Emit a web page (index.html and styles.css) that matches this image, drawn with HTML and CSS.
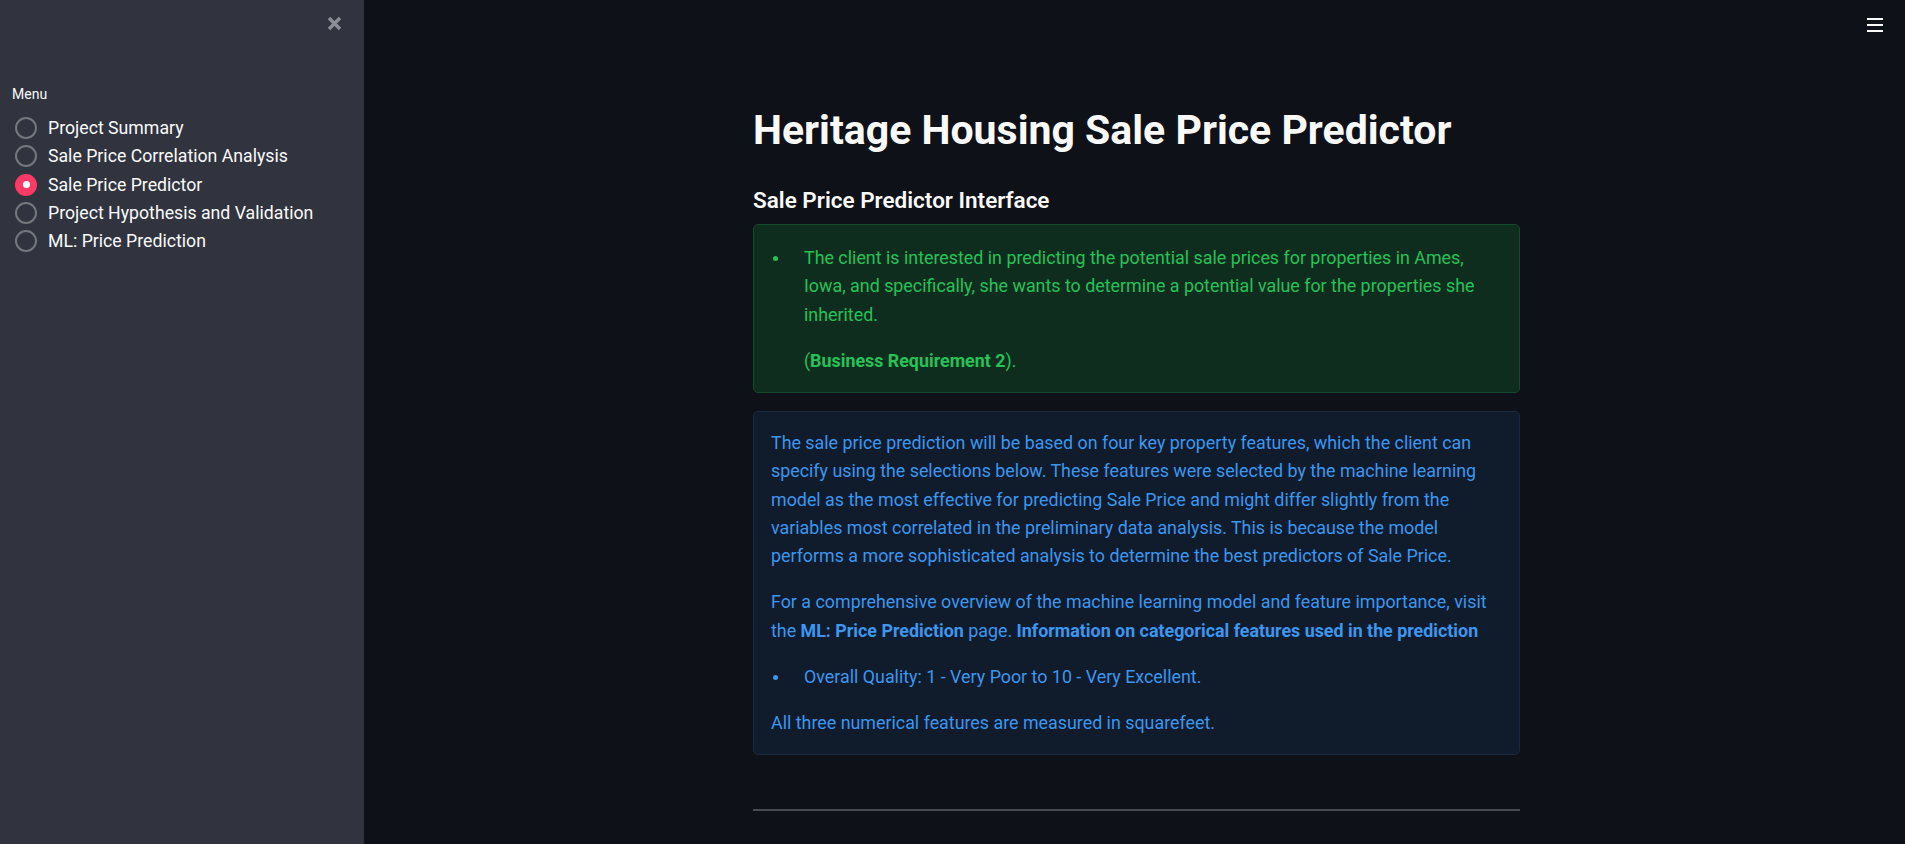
FILE: index.html
```html
<!DOCTYPE html>
<html lang="en">
<head>
<meta charset="utf-8">
<title>Heritage Housing Sale Price Predictor</title>
<link rel="stylesheet" href="styles.css">
</head>
<body>
<div class="app">
  <aside class="sidebar">
    <div class="sidebar-top">
      <button class="close-btn" aria-label="Close sidebar">
        <svg width="15" height="15" viewBox="0 0 15 15"><path d="M2 2 L13 13 M13 2 L2 13" stroke="#8d8e95" stroke-width="3.4" stroke-linecap="butt"/></svg>
      </button>
    </div>
    <div class="menu">
      <div class="menu-label">Menu</div>
      <ul class="radio-list">
        <li class="radio-item"><span class="radio"></span><span class="radio-text">Project Summary</span></li>
        <li class="radio-item"><span class="radio"></span><span class="radio-text">Sale Price Correlation Analysis</span></li>
        <li class="radio-item"><span class="radio checked"></span><span class="radio-text">Sale Price Predictor</span></li>
        <li class="radio-item"><span class="radio"></span><span class="radio-text">Project Hypothesis and Validation</span></li>
        <li class="radio-item"><span class="radio"></span><span class="radio-text">ML: Price Prediction</span></li>
      </ul>
    </div>
  </aside>
  <main class="main">
    <button class="hamburger" aria-label="Menu">
      <span></span><span></span><span></span>
    </button>
    <div class="block">
      <h1 class="title">Heritage Housing Sale Price Predictor</h1>
      <h3 class="subtitle">Sale Price Predictor Interface</h3>
      <div class="alert success">
        <ul class="bullets first">
          <li>The client is interested in predicting the potential sale prices for properties in Ames,<br>Iowa, and specifically, she wants to determine a potential value for the properties she<br>inherited.</li>
        </ul>
        <p class="indented">(<strong>Business Requirement 2</strong>).</p>
      </div>
      <div class="alert info">
        <p>The sale price prediction will be based on four key property features, which the client can<br>specify using the selections below. These features were selected by the machine learning<br>model as the most effective for predicting Sale Price and might differ slightly from the<br>variables most correlated in the preliminary data analysis. This is because the model<br>performs a more sophisticated analysis to determine the best predictors of Sale Price.</p>
        <p>For a comprehensive overview of the machine learning model and feature importance, visit<br>the <strong>ML: Price Prediction</strong> page. <strong>Information on categorical features used in the prediction</strong></p>
        <ul class="bullets">
          <li>Overall Quality: 1 - Very Poor to 10 - Very Excellent.</li>
        </ul>
        <p>All three numerical features are measured in squarefeet.</p>
      </div>
      <hr class="divider">
    </div>
  </main>
</div>
</body>
</html>
```
FILE: styles.css
```css
* { box-sizing: border-box; }
html, body {
  margin: 0;
  padding: 0;
  height: 100%;
  overflow: hidden;
}
body {
  font-family: Roboto, "Liberation Sans", sans-serif;
  color: #fafafa;
  background: #0e1117;
}
.app {
  display: flex;
  height: 100vh;
}
.sidebar {
  width: 364px;
  flex: 0 0 364px;
  background: #31333f;
  padding: 16px 22px 0 12px;
}
.sidebar-top {
  display: flex;
  justify-content: flex-end;
  height: 69px;
}
.close-btn {
  background: none;
  border: 0;
  padding: 0;
  width: 15px;
  height: 15px;
  cursor: pointer;
}
.close-btn svg { display: block; }
.menu-label {
  font-size: 14px;
  line-height: 18px;
  color: #fafafa;
  margin-bottom: 11px;
}
.radio-list {
  list-style: none;
  margin: 0;
  padding: 0;
}
.radio-item {
  display: flex;
  align-items: center;
  height: 28.25px;
  gap: 11px;
}
.radio {
  width: 22px;
  height: 22px;
  border-radius: 50%;
  border: 2px solid #76777d;
  margin-left: 3px;
  flex: 0 0 22px;
  display: flex;
  align-items: center;
  justify-content: center;
}
.radio.checked {
  background: #fd3a66;
  border-color: #fd3a66;
}
.radio.checked::after {
  content: "";
  width: 7px;
  height: 7px;
  border-radius: 50%;
  background: #ffffff;
}
.radio-text {
  font-size: 17.7px;
  color: #fafafa;
}
.main {
  flex: 1;
  position: relative;
  display: flex;
  justify-content: center;
  padding-left: 4px;
}
.hamburger {
  position: absolute;
  top: 18px;
  right: 22px;
  width: 16px;
  background: none;
  border: 0;
  padding: 0;
  display: flex;
  flex-direction: column;
  gap: 4px;
}
.hamburger span {
  display: block;
  height: 2px;
  background: #fafafa;
}
.block {
  width: 767px;
  padding-top: 104px;
}
.title {
  font-size: 41px;
  line-height: 52px;
  font-weight: 700;
  margin: 0 0 29px;
  color: #fafafa;
}
.subtitle {
  font-size: 22.5px;
  line-height: 30px;
  font-weight: 600;
  margin: 0 0 9px;
  color: #fafafa;
}
.alert {
  border-radius: 5px;
  padding: 17px;
  font-size: 17.85px;
  line-height: 28.25px;
  margin-bottom: 18px;
}
.alert p { margin: 18px 0 0; }
.alert p.indented { padding-left: 33px; }
.alert > :first-child { margin-top: 0; }
.alert strong { font-weight: 700; }
.success {
  background: #0e2d1f;
  border: 1px solid #174a2c;
  color: #25c257;
}
.info {
  background: #101b2c;
  border: 1px solid #182a42;
  color: #3b97f0;
}
.bullets {
  list-style: none;
  margin: 18px 0 0;
  padding: 0;
}
.bullets.first { margin-top: 2px; }
.bullets li {
  position: relative;
  padding-left: 33px;
}
.bullets li::before {
  content: "";
  position: absolute;
  left: 2px;
  top: 12px;
  width: 5px;
  height: 5px;
  border-radius: 50%;
  background: currentColor;
}
.divider {
  margin: 54px 0 0;
  border: 0;
  height: 2px;
  background: #4a4b51;
}
```
